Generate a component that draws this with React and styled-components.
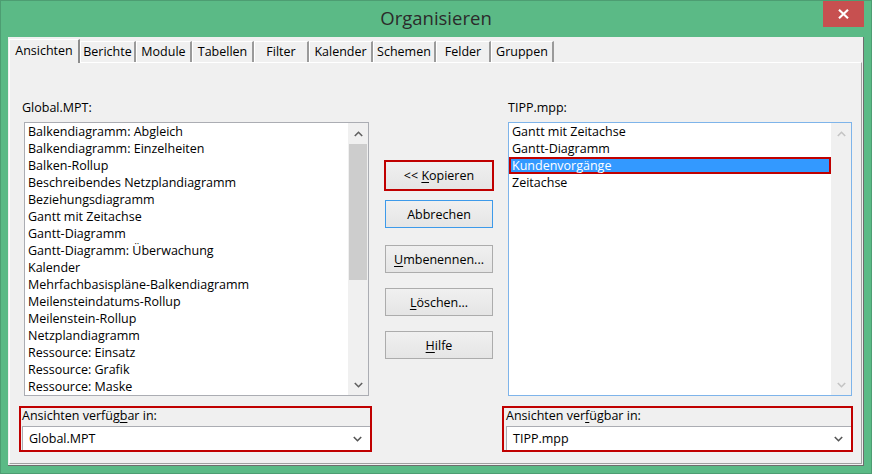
import styled, { createGlobalStyle } from "styled-components";

const GlobalStyle = createGlobalStyle`
  html, body {
    margin: 0;
    padding: 0;
    background: #ffffff;
  }
  body {
    font-family: "Open Sans", "Noto Sans", sans-serif;
    font-size: 12.5px;
    color: #000;
  }
`;

const Window = styled.div`
  width: 872px;
  height: 474px;
  box-sizing: border-box;
  display: flex;
  flex-direction: column;
  background: #5bba86;
  border: 1px solid #4d9d72;
  padding: 0 7px 7px 7px;
`;

const TitleBar = styled.div`
  height: 36px;
  flex: none;
  display: grid;
  grid-template-columns: 1fr auto 1fr;
  align-items: start;
  margin: 0 -7px 0 -7px;
`;

const Title = styled.div`
  grid-column: 2;
  padding-top: 5px;
  font-size: 18.5px;
  line-height: 24px;
  color: #2b2b2b;
`;

const CloseButton = styled.div`
  grid-column: 3;
  justify-self: end;
  margin-right: 7px;
  width: 41px;
  height: 26px;
  background: #c75050;
  display: flex;
  align-items: center;
  justify-content: center;
`;

const Body = styled.div`
  flex: 1;
  display: flex;
  flex-direction: column;
  background: #f0f0f0;
  border-right: 1px solid #6d6d6d;
  border-bottom: 1px solid #6d6d6d;
  padding: 2px 1px 1px 1px;
`;

const TabStrip = styled.div`
  display: flex;
  align-items: flex-end;
  height: 23px;
  position: relative;
  z-index: 1;
`;

const Tab = styled.div`
  box-sizing: border-box;
  width: ${(p) => p.$w}px;
  height: ${(p) => (p.$active ? 24 : 21)}px;
  margin-bottom: ${(p) => (p.$active ? -1 : 0)}px;
  background: #f0f0f0;
  border-top: 1px solid #ffffff;
  border-left: 1px solid #ffffff;
  border-right: 2px solid ${(p) => (p.$active ? "#8c8c8c" : "#9a9a9a")};
  display: flex;
  justify-content: center;
  padding-top: ${(p) => (p.$active ? 2 : 1)}px;
  line-height: 17px;
  white-space: nowrap;
`;

const Panel = styled.div`
  flex: 1;
  border-top: 1px solid #ffffff;
  border-left: 1px solid #ffffff;
  border-right: 1px solid #a0a0a0;
  border-bottom: 1px solid #a0a0a0;
  display: grid;
  grid-template-columns: 353px 110px 351px;
  column-gap: 10px;
  padding-left: 9px;
  align-items: start;
`;

const Column = styled.div`
  display: flex;
  flex-direction: column;
  padding-top: 36px;
`;

const Label = styled.div`
  line-height: 17px;
  margin-left: ${(p) => p.$indent}px;
`;

const ListBox = styled.div`
  margin-top: 6px;
  margin-left: ${(p) => p.$left}px;
  margin-right: ${(p) => p.$right}px;
  height: 274px;
  box-sizing: border-box;
  background: #ffffff;
  border: 1px solid ${(p) => (p.$focused ? "#7eb4ea" : "#abadb3")};
  display: flex;
  overflow: hidden;
`;

const Items = styled.div`
  flex: 1;
  display: flex;
  flex-direction: column;
`;

const Item = styled.div`
  box-sizing: border-box;
  height: 17px;
  padding-top: 1px;
  line-height: 16px;
  padding-left: 3px;
  white-space: nowrap;
  background: ${(p) => (p.$selected ? "#3399ff" : "transparent")};
  color: ${(p) => (p.$selected ? "#ffffff" : "#000000")};
  box-shadow: ${(p) => (p.$selected ? "inset 0 0 0 2px #c00000" : "none")};
`;

const ScrollBar = styled.div`
  width: 20px;
  flex: none;
  background: #f0f0f0;
  display: flex;
  flex-direction: column;
`;

const ScrollArrow = styled.div`
  height: ${(p) => p.$h}px;
  flex: none;
  display: flex;
  align-items: center;
  justify-content: center;
`;

const Track = styled.div`
  flex: 1;
  display: flex;
  flex-direction: column;
`;

const Thumb = styled.div`
  height: 136px;
  margin: 0 1px;
  background: #cdcdcd;
`;

const Group = styled.div`
  margin-top: 10px;
  border: 2px solid #c00000;
  display: flex;
  flex-direction: column;
  height: 46px;
  box-sizing: border-box;
`;

const GroupLabel = styled.div`
  line-height: 16px;
  padding-left: ${(p) => p.$indent}px;
`;

const Combo = styled.div`
  margin-top: 2px;
  margin-left: ${(p) => p.$left}px;
  height: 24px;
  box-sizing: border-box;
  background: #ffffff;
  border: 1px solid #abadb3;
  border-bottom: none;
  border-right: none;
  display: flex;
  align-items: center;
  justify-content: space-between;
  padding: 0 7px 0 6px;
`;

const ButtonColumn = styled.div`
  display: flex;
  flex-direction: column;
  padding-top: 97px;
  padding-left: 2px;
  gap: 15px;
`;

const ButtonPair = styled.div`
  display: flex;
  flex-direction: column;
  gap: 9px;
  margin-bottom: 2px;
`;

const Button = styled.div`
  box-sizing: border-box;
  width: ${(p) => (p.$marked ? 110 : 108)}px;
  height: ${(p) => (p.$marked ? 31 : 28)}px;
  margin-left: ${(p) => (p.$marked ? 0 : 1)}px;
  background: linear-gradient(#f0f0f0, #e5e5e5);
  border: ${(p) =>
    p.$marked
      ? "2px solid #c00000"
      : p.$default
      ? "1px solid #3d9aea"
      : "1px solid #acacac"};
  display: flex;
  align-items: center;
  justify-content: center;
  white-space: nowrap;
`;

const Key = styled.span`
  text-decoration: underline;
  text-underline-offset: 2px;
`;

const Chevron = ({ up, color = "#606060", w = 9 }) => (
  <svg width={w} height="6" viewBox="0 0 9 6">
    <polyline
      points={up ? "0.8,5 4.5,1.3 8.2,5" : "0.8,1 4.5,4.7 8.2,1"}
      fill="none"
      stroke={color}
      strokeWidth="1.6"
    />
  </svg>
);

const tabs = [
  { label: "Ansichten", w: 71, active: true },
  { label: "Berichte", w: 56 },
  { label: "Module", w: 56 },
  { label: "Tabellen", w: 62 },
  { label: "Filter", w: 55 },
  { label: "Kalender", w: 64 },
  { label: "Schemen", w: 63 },
  { label: "Felder", w: 55 },
  { label: "Gruppen", w: 63 },
];

const globalViews = [
  "Balkendiagramm: Abgleich",
  "Balkendiagramm: Einzelheiten",
  "Balken-Rollup",
  "Beschreibendes Netzplandiagramm",
  "Beziehungsdiagramm",
  "Gantt mit Zeitachse",
  "Gantt-Diagramm",
  "Gantt-Diagramm: Überwachung",
  "Kalender",
  "Mehrfachbasispläne-Balkendiagramm",
  "Meilensteindatums-Rollup",
  "Meilenstein-Rollup",
  "Netzplandiagramm",
  "Ressource: Einsatz",
  "Ressource: Grafik",
  "Ressource: Maske",
];

const projectViews = [
  "Gantt mit Zeitachse",
  "Gantt-Diagramm",
  "Kundenvorgänge",
  "Zeitachse",
];

const App = () => {
  return (
    <>
      <GlobalStyle />
      <Window>
        <TitleBar>
          <Title>Organisieren</Title>
          <CloseButton>
            <svg width="11" height="10" viewBox="0 0 11 10">
              <path d="M1 0.8 L10 9.2 M10 0.8 L1 9.2" stroke="#ffffff" strokeWidth="2.2" />
            </svg>
          </CloseButton>
        </TitleBar>
        <Body>
          <TabStrip>
            {tabs.map((t) => (
              <Tab key={t.label} $w={t.w} $active={t.active}>
                {t.label}
              </Tab>
            ))}
          </TabStrip>
          <Panel>
            <Column>
              <Label $indent={3}>Global.MPT:</Label>
              <ListBox $left={5} $right={3}>
                <Items>
                  {globalViews.map((v) => (
                    <Item key={v}>{v}</Item>
                  ))}
                </Items>
                <ScrollBar>
                  <ScrollArrow $h={21}>
                    <Chevron up />
                  </ScrollArrow>
                  <Track>
                    <Thumb />
                  </Track>
                  <ScrollArrow $h={20}>
                    <Chevron />
                  </ScrollArrow>
                </ScrollBar>
              </ListBox>
              <Group>
                <GroupLabel $indent={1}>
                  Ansichten verfüg<Key>b</Key>ar in:
                </GroupLabel>
                <Combo $left={1}>
                  <span>Global.MPT</span>
                  <Chevron color="#555555" w={11} />
                </Combo>
              </Group>
            </Column>

            <ButtonColumn>
              <ButtonPair>
                <Button $marked>
                  &lt;&lt;&nbsp;<Key>K</Key>opieren
                </Button>
                <Button $default>Abbrechen</Button>
              </ButtonPair>
              <Button>
                <Key>U</Key>mbenennen...
              </Button>
              <Button>
                <Key>L</Key>öschen...
              </Button>
              <Button>
                <Key>H</Key>ilfe
              </Button>
            </ButtonColumn>

            <Column>
              <Label $indent={6}>TIPP.mpp:</Label>
              <ListBox $left={6} $right={1} $focused>
                <Items>
                  {projectViews.map((v) => (
                    <Item key={v} $selected={v === "Kundenvorgänge"}>
                      {v}
                    </Item>
                  ))}
                </Items>
                <ScrollBar>
                  <ScrollArrow $h={21}>
                    <Chevron up color="#c4c4c4" />
                  </ScrollArrow>
                  <Track />
                  <ScrollArrow $h={20}>
                    <Chevron color="#c4c4c4" />
                  </ScrollArrow>
                </ScrollBar>
              </ListBox>
              <Group>
                <GroupLabel $indent={2}>
                  Ansichten ver<Key>f</Key>ügbar in:
                </GroupLabel>
                <Combo $left={2}>
                  <span>TIPP.mpp</span>
                  <Chevron color="#555555" w={11} />
                </Combo>
              </Group>
            </Column>
          </Panel>
        </Body>
      </Window>
    </>
  );
};

export default App;
